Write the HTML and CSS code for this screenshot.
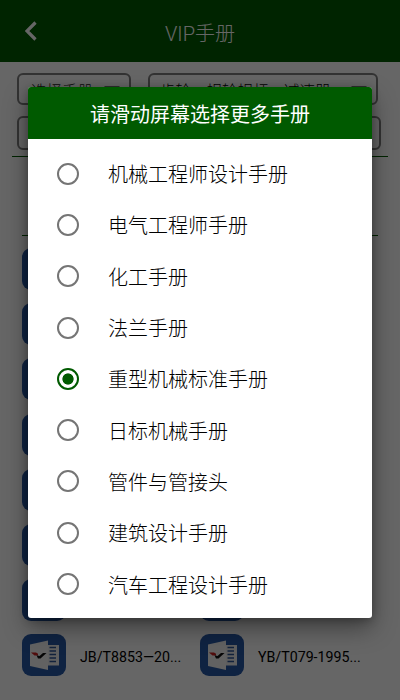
FILE: index.html
```html
<!DOCTYPE html>
<html lang="zh-CN">
<head>
    <meta charset="UTF-8">
    <meta name="viewport" content="width=device-width, initial-scale=1.0">
    <title>VIP手册</title>
    <link rel="stylesheet" href="styles.css">
</head>
<body>
    <!-- Document icon -->
    <svg class="defs" width="0" height="0">
        <symbol id="doc" viewBox="0 0 44 42">
            <rect width="44" height="42" rx="9" fill="#2658a6"/>
            <path d="M25 11h12v20.500H25z" fill="#eee"/>
            <path d="M27.500 13.5h6.500M27.500 17h6.500M27.500 20.5h6.500M27.500 24h6.500M27.500 27.5h6.500" stroke="#2d5596" stroke-width="1.3"/>
            <path d="M8 10.5L26 6.500v29.500L8 32z" fill="#f4f4f4"/>
            <path d="M9 18.500h5l2 1.300v1.700h-3.500z" fill="#c22"/>
            <path d="M14.500 21.200l3 .8 3.500-3h3.500l-6 5.500h-2.500z" fill="#111"/>
        </symbol>
    </svg>

    <header>
        <svg class="back" viewBox="0 0 12 20"><path d="M10.500 1.500L2 10l8.500 8.500"/></svg>
        <h1>VIP手册</h1>
    </header>

    <main>
        <div class="filters">
            <div class="select small"><span>选择手册</span><i class="arrow"></i></div>
            <div class="select wide"><span>齿轮、蜗轮蜗杆、减速器</span><i class="arrow"></i></div>
        </div>
        <div class="search"></div>
        <div class="tabs"></div>
        <div class="docs">
            <div class="doc"><svg><use href="#doc"/></svg></div>
            <div class="doc"><svg><use href="#doc"/></svg></div>
            <div class="doc"><svg><use href="#doc"/></svg></div>
            <div class="doc"><svg><use href="#doc"/></svg></div>
            <div class="doc"><svg><use href="#doc"/></svg></div>
            <div class="doc"><svg><use href="#doc"/></svg></div>
            <div class="doc"><svg><use href="#doc"/></svg></div>
            <div class="doc"><svg><use href="#doc"/></svg></div>
            <div class="doc"><svg><use href="#doc"/></svg></div>
            <div class="doc"><svg><use href="#doc"/></svg></div>
            <div class="doc"><svg><use href="#doc"/></svg></div>
            <div class="doc"><svg><use href="#doc"/></svg></div>
            <div class="doc"><svg><use href="#doc"/></svg></div>
            <div class="doc"><svg><use href="#doc"/></svg></div>
            <div class="doc"><svg><use href="#doc"/></svg><span>JB/T8853—20...</span></div>
            <div class="doc"><svg><use href="#doc"/></svg><span>YB/T079-1995...</span></div>
        </div>
    </main>

    <!-- Handbook dialog -->
    <div class="overlay">
        <div class="dialog">
            <h2>请滑动屏幕选择更多手册</h2>
            <ul>
                <li><i class="radio"></i>机械工程师设计手册</li>
                <li><i class="radio"></i>电气工程师手册</li>
                <li><i class="radio"></i>化工手册</li>
                <li><i class="radio"></i>法兰手册</li>
                <li><i class="radio checked"></i>重型机械标准手册</li>
                <li><i class="radio"></i>日标机械手册</li>
                <li><i class="radio"></i>管件与管接头</li>
                <li><i class="radio"></i>建筑设计手册</li>
                <li><i class="radio"></i>汽车工程设计手册</li>
            </ul>
        </div>
    </div>
</body>
</html>
```

FILE: styles.css
```css
/* General Styles */
* {
    box-sizing: border-box;
}
body {
    margin: 0;
    height: 700px;
    overflow: hidden;
    position: relative;
    background: #fff;
    color: #222;
    font-family: Roboto, "Noto Sans CJK SC", sans-serif;
}
.defs {
    position: absolute;
}
header {
    display: flex;
    align-items: center;
    height: 62px;
    padding: 0 25px;
    background: #005a00;
    color: #fff;
}
.back {
    width: 12px;
    height: 20px;
    fill: none;
    stroke: #fff;
    stroke-width: 3.2;
}
h1 {
    flex: 1;
    margin: 3px 12px 0 0;
    font-size: 20px;
    font-weight: 300;
    text-align: center;
}

/* Filters */
.filters {
    display: flex;
    gap: 17px;
    padding: 11px 0 0 17px;
}
.select {
    display: flex;
    align-items: center;
    justify-content: space-between;
    height: 32px;
    padding: 0 9px 0 12px;
    border: 2px solid #808080;
    border-radius: 6px;
    font-size: 15.5px;
    font-weight: 300;
    white-space: nowrap;
}
.small {
    width: 114px;
}
.wide {
    width: 230px;
    padding-left: 10px;
}
.wide span {
    color: #000;
}
.select span {
    padding-top: 2px;
}
.arrow {
    border: 8px solid transparent;
    border-top-color: #777;
    border-bottom: 0;
    margin-top: 1px;
}
.search {
    width: 364px;
    height: 34px;
    margin: 11px 0 0 17px;
    border: 2px solid #808080;
    border-radius: 6px;
}
.tabs {
    height: 80px;
    margin: 6px 12px 0;
    border-top: 1px solid #005a00;
    border-bottom: 1px solid transparent;
}

/* Document list */
.docs {
    display: grid;
    grid-template-columns: 178px 178px;
    grid-auto-rows: 55.2px;
    margin: -1px 22px 0;
    padding-top: 12px;
    border-top: 1px solid #005a00;
}
.doc {
    display: flex;
    gap: 14px;
    font-size: 14.2px;
    line-height: 46px;
    color: #000;
    white-space: nowrap;
}
.doc svg {
    flex: none;
    width: 44px;
    height: 42px;
}

/* Dialog */
.overlay {
    position: absolute;
    inset: 0;
    padding: 87px 28px 82px;
    background: rgba(0, 0, 0, 0.6);
}
.dialog {
    height: 531px;
    overflow: hidden;
    background: #fff;
    border-radius: 3px;
    box-shadow: 0 10px 24px rgba(0, 0, 0, 0.4), 0 2px 8px rgba(0, 0, 0, 0.25);
}
h2 {
    margin: 0;
    height: 52px;
    line-height: 56px;
    background: #005a00;
    color: #fff;
    font-size: 20px;
    font-weight: 400;
    text-align: center;
}
ul {
    margin: 0;
    padding: 9px 29px;
    list-style: none;
}
li {
    display: flex;
    align-items: center;
    gap: 29px;
    height: 51.3px;
    font-size: 20px;
    font-weight: 300;
    color: #000;
}
.radio {
    width: 22px;
    height: 22px;
    border: 2px solid #757575;
    border-radius: 50%;
}
.checked {
    border-color: #005a00;
    background: radial-gradient(circle, #005a00 5.2px, transparent 6px);
}
```
